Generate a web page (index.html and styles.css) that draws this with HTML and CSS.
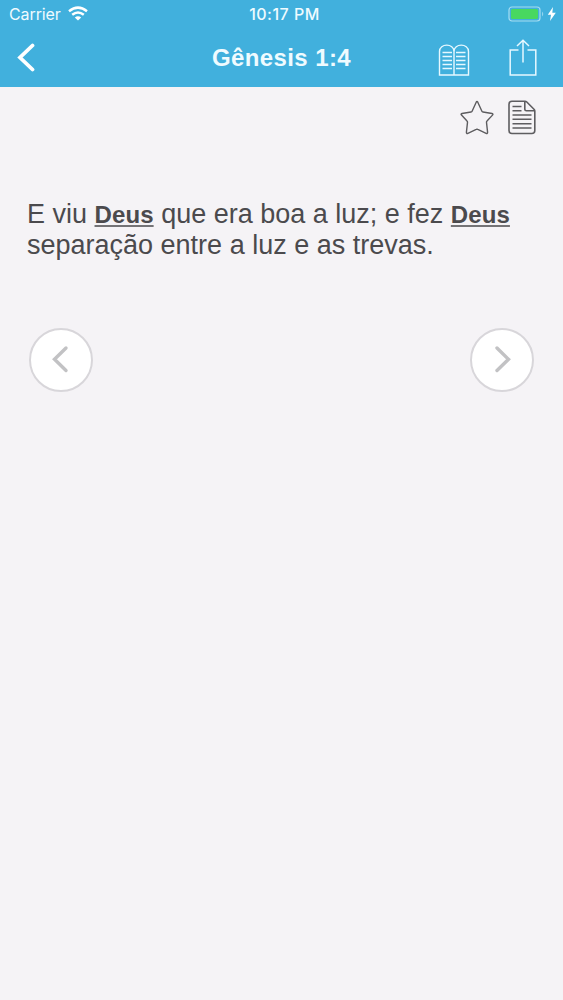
FILE: index.html
```html
<!DOCTYPE html>
<html lang="pt">
<head>
<meta charset="utf-8">
<title>Gênesis 1:4</title>
<link rel="stylesheet" href="styles.css">
</head>
<body>
<header class="header">
  <div class="status">
    <div class="status-left">
      <span class="carrier">Carrier</span>
      <svg class="wifi" width="20" height="15" viewBox="0 0 20 15" fill="none" stroke="#fff" stroke-width="2.5">
        <path d="M1 5.2Q10-2 19 5.2"/>
        <path d="M4.2 8.8Q10 4.2 15.8 8.8"/>
        <path d="M10 14.6L6.8 11.4Q10 9 13.2 11.4Z" fill="#fff" stroke="none"/>
      </svg>
    </div>
    <span class="clock">10:17 PM</span>
    <svg class="battery" width="50" height="18" viewBox="0 0 50 18">
      <rect x="2" y="2" width="31" height="14" rx="3" fill="none" stroke="#a5dcf2" stroke-width="1.2"/>
      <rect x="4" y="4" width="27" height="10" rx="1.5" fill="#48d860"/>
      <path d="M35.2 6.5Q37.2 9 35.2 11.5Z" fill="#a5dcf2"/>
      <path d="M46 2L40.8 9.8H44L43 16L48.8 7.8H45.3Z" fill="#fff"/>
    </svg>
  </div>
  <nav class="nav">
    <svg class="back" width="20" height="32" viewBox="0 0 20 32" fill="none" stroke="#fff" stroke-width="3.8" stroke-linecap="round" stroke-linejoin="miter">
      <path d="M17.5 3.5L5 15.5L17.5 27.5"/>
    </svg>
    <h1 class="title">Gênesis 1:4</h1>
    <div class="nav-actions">
      <svg width="32" height="38" viewBox="0 0 32 38" fill="none" stroke="#e6f8ff" stroke-width="1.4">
        <path d="M1.5 36V12.5C1.5 4 16 4 16 12.5V36ZM16 12.5C16 4 30.5 4 30.5 12.5V36H16"/>
        <path d="M4.5 13.5H14M4.5 17.5H14M4.5 21.5H14M4.5 25.5H14M4.5 29.5H14M18 13.5H27.5M18 17.5H27.5M18 21.5H27.5M18 25.5H27.5M18 29.5H27.5"/>
      </svg>
      <svg width="28" height="38" viewBox="0 0 28 38" fill="none" stroke="#e6f8ff" stroke-width="1.5">
        <path d="M9.5 11H1.2V36H26.8V11H18.5"/>
        <path d="M14 23.5V1.2M8 7L14 1.2L20 7"/>
      </svg>
    </div>
  </nav>
</header>
<main>
  <div class="tools">
    <svg width="34" height="35" viewBox="0 0 34 35" fill="none" stroke="#5e5d60" stroke-width="1.4" stroke-linejoin="round">
      <path d="M16.2 2.2Q17 .7 17.8 2.2L21.9 11.2Q22.2 11.9 23 12L32 13.5Q33.6 13.9 32.5 15.1L27 21Q26.4 21.6 26.5 22.4L27.6 32.3Q27.6 34 26.1 33.3L17.8 29.4Q17 29 16.2 29.4L7.9 33.3Q6.4 34 6.4 32.3L7.5 22.4Q7.6 21.6 7 21L1.5 15.1Q.4 13.9 2 13.5L11 12Q11.8 11.9 12.1 11.2Z"/>
    </svg>
    <svg width="28" height="35" viewBox="0 0 28 35" fill="none" stroke="#5e5d60" stroke-width="1.6" stroke-linejoin="round">
      <path d="M4 1.2H17Q18 1.2 18.8 2L26 9.2Q26.8 10 26.8 11V30.5Q26.8 33.5 23.8 33.5H4Q1 33.5 1 30.5V4.2Q1 1.2 4 1.2ZM16.8 1.5V9.2Q16.8 10.8 18.4 10.8H26.5"/>
      <path d="M4.5 6.5H13.5M4.5 10.8H13.5M4.5 15H23.5M4.5 19.3H23.5M4.5 23.7H23.5M4.5 28H23.5"/>
    </svg>
  </div>
  <p class="verse"><span class="line">E viu <b>Deus</b> que era boa a luz; e fez <b>Deus</b></span> <span class="line">separação entre a luz e as trevas.</span></p>
  <div class="pager">
    <button class="round" aria-label="Anterior">
      <svg width="60" height="60" viewBox="0 0 60 60" fill="none" stroke="#c2c2c4" stroke-width="3.4" stroke-linecap="round"><path d="M35 18L23.5 29.3L35 40.5"/></svg>
    </button>
    <button class="round" aria-label="Próximo">
      <svg width="60" height="60" viewBox="0 0 60 60" fill="none" stroke="#c2c2c4" stroke-width="3.4" stroke-linecap="round"><path d="M25 18L36.5 29.3L25 40.5"/></svg>
    </button>
  </div>
</main>
</body>
</html>
```
FILE: styles.css
```css
* { box-sizing: border-box; }
body {
  margin: 0;
  min-height: 1000px;
  background: #f5f3f6;
  color: #4b4a4d;
  font-family: "Liberation Sans", Arial, sans-serif;
}
svg { display: block; flex: none; }
.header { height: 87px; background: #41b0dd; color: #effbff; }
.status {
  display: grid;
  grid-template-columns: 1fr auto 1fr;
  align-items: center;
  height: 29px;
  padding: 0 6px 1px 9px;
  font: 16px/28px Inter, sans-serif;
}
.status-left { display: flex; align-items: center; gap: 7px; }
.carrier { letter-spacing: -0.1px; }
.clock { font-weight: 500; letter-spacing: 0.5px; padding-left: 3px; }
.wifi { margin-top: -1px; }
.battery { justify-self: end; margin-top: -1px; }
.nav {
  display: grid;
  grid-template-columns: 1fr auto 1fr;
  height: 58px;
  padding: 0 26px 0 15px;
}
.back { margin-top: 13px; }
.title {
  margin: 0;
  padding-left: 11px;
  font-size: 24px;
  line-height: 57px;
  font-weight: 700;
  letter-spacing: 0.4px;
}
.nav-actions { display: flex; justify-content: flex-end; gap: 39px; padding-top: 10px; }
.tools { display: flex; justify-content: flex-end; gap: 14px; padding: 13px 27px 0; }
.verse { margin: 64px 27px 0; font-size: 27px; line-height: 31px; }
.line { display: block; white-space: nowrap; }
.verse b {
  font-size: 24px;
  letter-spacing: 0.1px;
  text-decoration: underline;
  text-decoration-color: #747376;
  text-decoration-thickness: 1.5px;
  text-underline-offset: 2px;
}
.pager { display: flex; justify-content: space-between; padding: 67px 29px 0; }
.round {
  display: grid;
  place-items: center;
  width: 64px;
  height: 64px;
  padding: 0;
  border: 2px solid #d8d6da;
  border-radius: 50%;
  background: #fff;
}
```
